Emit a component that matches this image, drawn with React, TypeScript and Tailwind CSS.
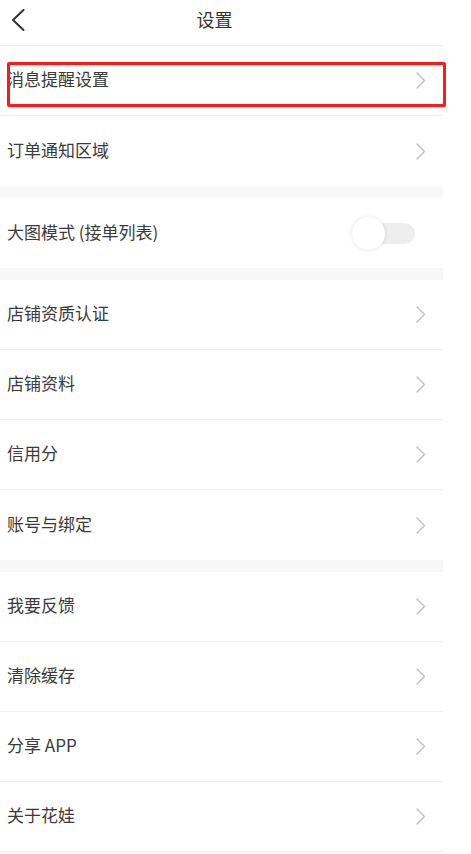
import React, { useState } from "react";

const groups: string[][] = [
  ["消息提醒设置", "订单通知区域"],
  ["__toggle__"],
  ["店铺资质认证", "店铺资料", "信用分", "账号与绑定"],
  ["我要反馈", "清除缓存", "分享 APP", "关于花娃"],
];

function ChevronRight() {
  return (
    <svg width="10" height="17" viewBox="0 0 10 17" fill="none">
      <path d="M1 1 L8.5 8.5 L1 16" stroke="#bdbdbd" strokeWidth="1.3" strokeLinecap="round" strokeLinejoin="round" />
    </svg>
  );
}

function Toggle() {
  const [on, setOn] = useState(false);
  return (
    <button
      onClick={() => setOn(!on)}
      className="relative w-[64px] h-[36px] flex items-center"
      aria-label="大图模式"
    >
      <span className="absolute left-[17px] right-[1px] h-[21px] rounded-full bg-[#eeeeee]" />
      <span className="absolute left-0 w-[33px] h-[33px] rounded-full bg-white shadow-[0_0_4px_rgba(0,0,0,0.12)]" />
    </button>
  );
}

function Row({ label, last }: { label: string; last: boolean }) {
  if (label === "__toggle__") {
    return (
      <div className="h-[70px] flex items-center justify-between pl-[7px] pr-[27px]">
        <span className="pb-[3px]">大图模式 (接单列表)</span>
        <Toggle />
      </div>
    );
  }
  return (
    <div className={`h-[70px] flex items-center justify-between pl-[7px] pr-[17px] ${last ? "" : "border-b border-[#f0f0f0]"}`}>
      <span className="pb-[3px]">{label}</span>
      <ChevronRight />
    </div>
  );
}

export default function App() {
  return (
    <div className="min-h-[854px] bg-white">
      <div
        className="relative w-[443px] bg-white text-[17px] text-[#3a3a3a]"
        style={{ fontFamily: '"Noto Sans CJK SC", "Noto Sans", sans-serif' }}
      >
        {/* 顶部标题栏 */}
        <div className="h-[46px] flex items-center border-b border-[#efefef]">
          <button className="w-[40px] h-[45px] flex items-center pl-[11px] pb-[6px]" aria-label="返回">
            <svg width="14" height="22" viewBox="0 0 14 22" fill="none">
              <path d="M12.5 1 L2 11 L12.5 21" stroke="#333" strokeWidth="2" strokeLinecap="round" strokeLinejoin="round" />
            </svg>
          </button>
          <div className="flex-1 flex justify-center pr-[54px] pb-[6px] text-[18px] text-[#333]">设置</div>
        </div>

        {groups.map((g, gi) => (
          <div key={gi}>
            {gi > 0 && <div className="h-[12px] bg-[#f7f7f7]" />}
            {g.map((label, i) => (
              <Row key={label} label={label} last={i === g.length - 1 && gi < groups.length - 1} />
            ))}
          </div>
        ))}

        {/* 标注框 */}
        <div className="absolute left-[7px] top-[62px] w-[439px] h-[45px] border-[3px] border-[#ff1a1a] rounded-[2px] pointer-events-none" />
      </div>
    </div>
  );
}
